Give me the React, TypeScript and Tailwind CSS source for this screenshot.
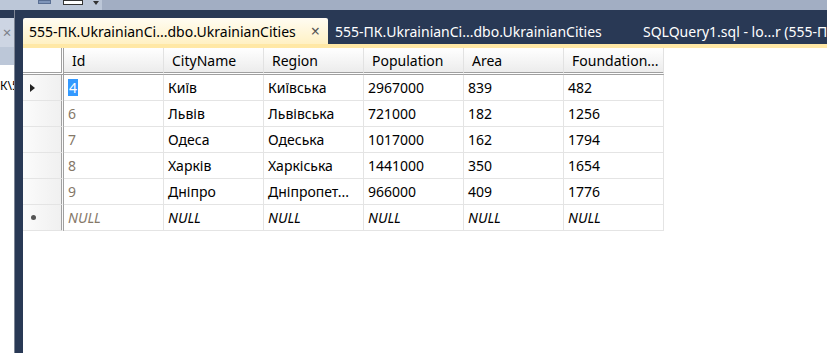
import React from "react";

const cols = ["Id", "CityName", "Region", "Population", "Area", "Foundation..."];
const rows = [
  ["4", "Київ", "Київська", "2967000", "839", "482"],
  ["6", "Львів", "Львівська", "721000", "182", "1256"],
  ["7", "Одеса", "Одеська", "1017000", "162", "1794"],
  ["8", "Харків", "Харкіська", "1441000", "350", "1654"],
  ["9", "Дніпро", "Дніпропет...", "966000", "409", "1776"],
];

export default function App() {
  const font = { fontFamily: '"Noto Sans", "Open Sans", sans-serif' };
  return (
    <div className="w-[827px] h-[353px] overflow-hidden flex flex-col bg-[#293955] text-[14px]" style={font}>
      {/* top toolbar strip */}
      <div className="h-[10px] flex shrink-0 bg-[#a2aec3]">
        <div className="w-[102px] bg-[#bcc7d8] relative">
          <div className="absolute left-[38px] top-0 w-[13px] h-[4px] bg-[#7f95b9] border border-[#5a6f93]" />
          <div className="absolute left-[63px] top-0 w-[20px] h-[5px] bg-white border border-[#333]" />
          <div className="absolute left-[93px] top-[1px] w-0 h-0 border-l-[3px] border-r-[3px] border-t-[4px] border-l-transparent border-r-transparent border-t-[#333]" />
        </div>
      </div>
      <div className="flex flex-1 min-h-0">
        {/* left panel */}
        <div className="w-[14px] flex flex-col shrink-0">
          <div className="h-[8px] bg-[#293955]" />
          <div className="h-[29px] bg-[#cdd5e3] flex items-center justify-center text-[#7a7f88] text-[15px] leading-none">×</div>
          <div className="h-[18px] bg-[#bcc7d8]" />
          <div className="flex-1 bg-white overflow-hidden">
            <div className="mt-[12px] text-[12px] text-black whitespace-nowrap">К\5</div>
          </div>
        </div>
        <div className="w-[9px] shrink-0 bg-[#293955] border-l border-[#7d8594]" />
        {/* document area */}
        <div className="flex-1 flex flex-col min-w-0 overflow-hidden">
          {/* tabs */}
          <div className="h-[34px] flex items-end shrink-0 pt-[8px]">
            <div className="h-[26px] w-[305px] shrink-0 flex items-center pl-[6px] pr-[8px] bg-gradient-to-b from-[#fffcf2] to-[#fff1c4] rounded-t-[2px] text-black whitespace-nowrap">
              <span>555-ПК.UkrainianCi...dbo.UkrainianCities</span>
              <span className="ml-auto text-[#555] text-[16px] leading-none">×</span>
            </div>
            <div className="h-[26px] shrink-0 flex items-center pl-[7px] text-white whitespace-nowrap w-[315px]">
              555-ПК.UkrainianCi...dbo.UkrainianCities
            </div>
            <div className="h-[26px] shrink-0 flex items-center text-white whitespace-nowrap">
              SQLQuery1.sql - lo...r (555-ПК
            </div>
          </div>
          <div className="h-[4px] bg-[#ffe8a6] shrink-0" />
          {/* grid */}
          <div className="flex-1 bg-white">
            <div className="grid grid-cols-[41px_repeat(6,100px)] w-max">
              {/* header */}
              <div className="h-[27px] bg-white border-b-[3px] border-double border-[#a0a0a0] border-r-[3px] border-r-[#a0a0a0]" />
              {cols.map((c) => (
                <div
                  key={c}
                  className="h-[27px] pl-[8px] flex items-center bg-gradient-to-b from-white to-[#ececec] border-b-[3px] border-double border-[#a0a0a0] border-r border-r-[#e2e2e2] text-black whitespace-nowrap overflow-hidden"
                >
                  {c}
                </div>
              ))}
              {rows.map((r, i) => (
                <React.Fragment key={i}>
                  <div className="h-[26px] flex items-center bg-gradient-to-r from-[#fbfbfb] to-[#f0f0f0] border-b border-[#e4e4e4] border-r-[3px] border-double border-r-[#a0a0a0] pl-[7px]">
                    {i === 0 && (
                      <div className="w-0 h-0 border-t-[4px] border-b-[4px] border-l-[5px] border-t-transparent border-b-transparent border-l-[#222]" />
                    )}
                  </div>
                  {r.map((v, j) => (
                    <div
                      key={j}
                      className={
                        "h-[26px] flex items-center pl-[4px] border-b border-r border-[#e4e4e4] whitespace-nowrap overflow-hidden " +
                        (j === 0 ? "text-[#857868]" : "text-black")
                      }
                    >
                      {i === 0 && j === 0 ? (
                        <span className="bg-[#3399ff] text-white px-[1px] leading-[17px]">{v}</span>
                      ) : (
                        v
                      )}
                    </div>
                  ))}
                </React.Fragment>
              ))}
              <div className="h-[26px] flex items-center bg-gradient-to-r from-[#fbfbfb] to-[#f0f0f0] border-b border-[#e4e4e4] border-r-[3px] border-double border-r-[#a0a0a0] pl-[8px]">
                <div className="w-[5px] h-[5px] rounded-full bg-[#555]" />
              </div>
              {cols.map((c, j) => (
                <div
                  key={c}
                  className={
                    "h-[26px] flex items-center pl-[4px] border-b border-r border-[#e4e4e4] italic " +
                    (j === 0 ? "text-[#857868]" : "text-black")
                  }
                >
                  NULL
                </div>
              ))}
            </div>
          </div>
        </div>
      </div>
    </div>
  );
}
